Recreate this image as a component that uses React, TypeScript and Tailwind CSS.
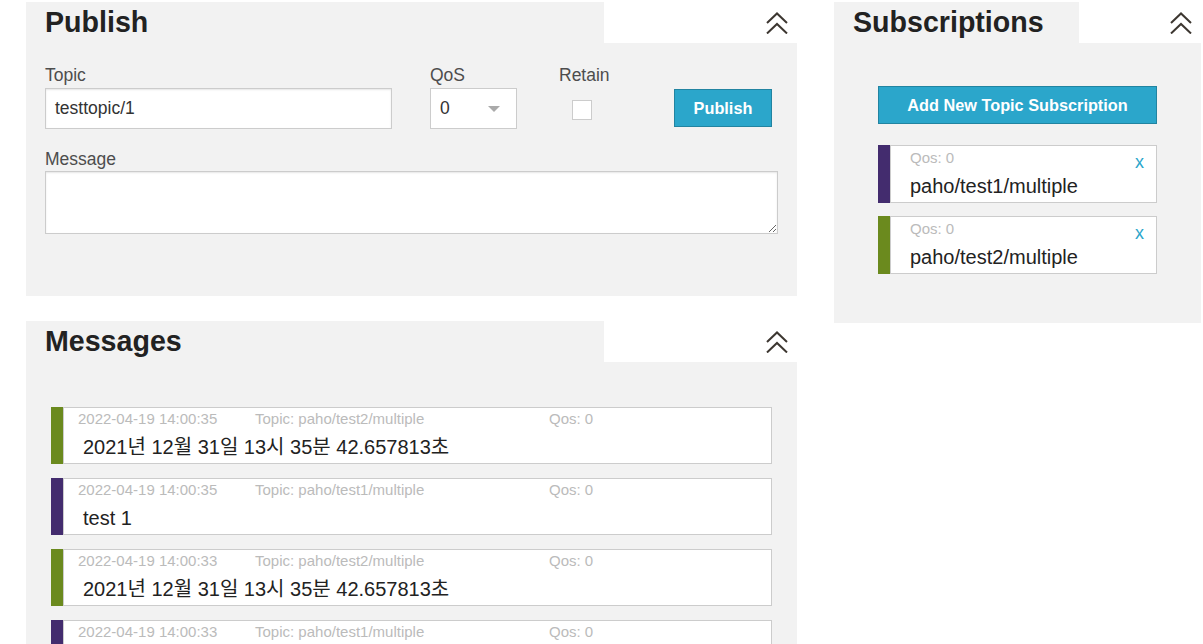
import React from "react";

const Chevrons = () => (
  <svg width="22" height="22" viewBox="0 0 22 22" fill="none" stroke="#3d3731" strokeWidth="2">
    <polyline points="1,11 11,1.5 21,11" />
    <polyline points="1,21.5 11,12 21,21.5" />
  </svg>
);

const Header = ({ title, rightW }: { title: string; rightW: string }) => (
  <div className="flex h-[41px]">
    <div className="flex-1 bg-[#f2f2f2] pl-[19px] text-[28.6px] leading-[41px] font-bold text-[#222]">{title}</div>
    <div className={`${rightW} bg-white flex items-center justify-end pr-[9px]`}>
      <Chevrons />
    </div>
  </div>
);

const messages = [
  { ts: "2022-04-19 14:00:35", topic: "paho/test2/multiple", body: "2021년 12월 31일 13시 35분 42.657813초", color: "bg-[#6b8a1e]" },
  { ts: "2022-04-19 14:00:35", topic: "paho/test1/multiple", body: "test 1", color: "bg-[#432c6e]" },
  { ts: "2022-04-19 14:00:33", topic: "paho/test2/multiple", body: "2021년 12월 31일 13시 35분 42.657813초", color: "bg-[#6b8a1e]" },
  { ts: "2022-04-19 14:00:33", topic: "paho/test1/multiple", body: "test 1", color: "bg-[#432c6e]" },
];

const subs = [
  { topic: "paho/test1/multiple", color: "bg-[#432c6e]" },
  { topic: "paho/test2/multiple", color: "bg-[#6b8a1e]" },
];

export default function App() {
  return (
    <div className="min-h-screen bg-white flex items-start pt-[2px] pl-[26px] gap-[37px] font-['Liberation_Sans','Noto_Sans_CJK_KR',sans-serif] text-[#4d4d4d]">
      <div className="w-[771px] flex flex-col gap-[25px] shrink-0">
        {/* Publish */}
        <div>
          <Header title="Publish" rightW="w-[193px]" />
          <div className="bg-[#f2f2f2] pl-[19px] pt-[22px] pb-[62px]">
            <div className="flex items-start">
              <div className="w-[347px]">
                <div className="text-[17.5px] leading-[20px] mb-[3px]">Topic</div>
                <div className="h-[41px] bg-white border border-[#cccccc] shadow-[inset_0_1px_2px_rgba(0,0,0,0.1)] pl-[9px] flex items-center text-[17.5px] text-[#333]">
                  testtopic/1
                </div>
              </div>
              <div className="w-[87px] ml-[38px]">
                <div className="text-[17.5px] leading-[20px] mb-[3px]">QoS</div>
                <div className="h-[41px] bg-white border border-[#cccccc] pl-[9px] pr-[16px] flex items-center justify-between text-[17.5px] text-[#333]">
                  <span>0</span>
                  <span className="w-0 h-0 border-l-[6px] border-r-[6px] border-t-[6px] border-l-transparent border-r-transparent border-t-[#aaaaaa]" />
                </div>
              </div>
              <div className="ml-[42px] w-[50px] flex flex-col items-start">
                <div className="text-[17.5px] leading-[20px]">Retain</div>
                <div className="mt-[15px] ml-[13px] w-[20px] h-[20px] bg-white border border-[#cccccc]" />
              </div>
              <button className="ml-[65px] mt-[24px] w-[98px] h-[38px] bg-[#2ba6cb] border border-[#2284a1] text-white font-bold text-[16.3px]">
                Publish
              </button>
            </div>
            <div className="text-[17.5px] leading-[20px] mt-[20px] mb-[2px]">Message</div>
            <textarea
              className="block w-[733px] h-[63px] bg-white border border-[#cccccc] shadow-[inset_0_1px_2px_rgba(0,0,0,0.1)] outline-none"
              defaultValue=""
            />
          </div>
        </div>

        {/* Messages */}
        <div>
          <Header title="Messages" rightW="w-[193px]" />
          <div className="bg-[#f2f2f2] px-[25px] pt-[45px] pb-[20px] flex flex-col gap-[14px]">
            {messages.map((m, i) => (
              <div key={i} className="flex h-[57px]">
                <div className={`w-[12px] shrink-0 ${m.color}`} />
                <div className="flex-1 bg-white border border-[#cccccc] pl-[14px] pt-[3px]">
                  <div className="flex text-[15px] leading-[16px] text-[#bbbbbb]">
                    <span className="w-[177px]">{m.ts}</span>
                    <span className="w-[294px]">Topic: {m.topic}</span>
                    <span>Qos: 0</span>
                  </div>
                  <div className="mt-[8px] pl-[5px] text-[20px] leading-[24px] text-[#222]">{m.body}</div>
                </div>
              </div>
            ))}
          </div>
        </div>
      </div>

      {/* Subscriptions */}
      <div className="w-[367px] shrink-0">
        <Header title="Subscriptions" rightW="w-[122px]" />
        <div className="bg-[#f2f2f2] pl-[44px] pr-[44px] pt-[43px] pb-[49px]">
          <button className="w-[279px] h-[38px] bg-[#2ba6cb] border border-[#2284a1] text-white font-bold text-[16.3px]">
            Add New Topic Subscription
          </button>
          <div className="mt-[21px] flex flex-col gap-[13px]">
            {subs.map((s, i) => (
              <div key={i} className="flex h-[58px] w-[279px]">
                <div className={`w-[12px] shrink-0 ${s.color}`} />
                <div className="relative flex-1 bg-white border border-[#cccccc] pl-[19px] pt-[4px]">
                  <div className="text-[15px] leading-[16px] text-[#bbbbbb]">Qos: 0</div>
                  <div className="mt-[8px] text-[20px] leading-[24px] text-[#222]">{s.topic}</div>
                  <span className="absolute top-[7px] right-[12px] text-[18px] leading-[18px] text-[#2ba6cb]">x</span>
                </div>
              </div>
            ))}
          </div>
        </div>
      </div>
    </div>
  );
}
